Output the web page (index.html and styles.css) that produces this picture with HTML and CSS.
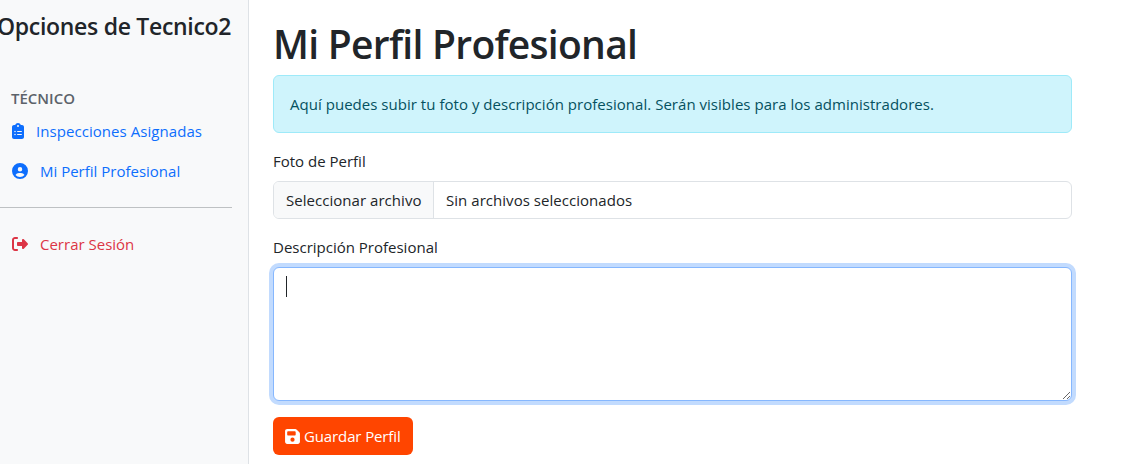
FILE: index.html
```html
<!DOCTYPE html>
<html lang="es">
<head>
<meta charset="utf-8">
<title>Mi Perfil Profesional</title>
<link rel="stylesheet" href="styles.css">
</head>
<body>
<div class="layout">
  <aside class="sidebar">
    <h4 class="sidebar-title">Opciones de Tecnico2</h4>
    <h6 class="sidebar-heading">TÉCNICO</h6>
    <nav class="menu">
      <a class="menu-link inspections"><svg class="icon" width="12" height="16" viewBox="0 0 384 512"><path d="M192 0c-41.800 0-77.400 26.700-90.500 64H64C28.700 64 0 92.700 0 128v320c0 35.300 28.700 64 64 64h256c35.300 0 64-28.700 64-64V128c0-35.300-28.700-64-64-64h-37.500C269.400 26.700 233.800 0 192 0zm0 64a32 32 0 1 1 0 64 32 32 0 1 1 0-64zM72 272a24 24 0 1 1 48 0 24 24 0 1 1-48 0zm104-16h128c8.800 0 16 7.200 16 16s-7.200 16-16 16H176c-8.800 0-16-7.200-16-16s7.200-16 16-16zM72 368a24 24 0 1 1 48 0 24 24 0 1 1-48 0zm88 0c0-8.800 7.200-16 16-16h128c8.800 0 16 7.200 16 16s-7.200 16-16 16H176c-8.800 0-16-7.200-16-16z"/></svg><span>Inspecciones Asignadas</span></a>
      <a class="menu-link profile"><svg class="icon" width="16" height="16" viewBox="0 0 512 512"><path d="M399 384.200C376.900 345.800 335.400 320 288 320h-64c-47.400 0-88.900 25.800-111 64.200 35.200 39.200 86.200 63.800 143 63.800s107.800-24.700 143-63.800zM0 256a256 256 0 1 1 512 0A256 256 0 1 1 0 256zm256 16a72 72 0 1 0 0-144 72 72 0 1 0 0 144z"/></svg><span>Mi Perfil Profesional</span></a>
    </nav>
    <hr class="divider">
    <a class="menu-link logout"><svg class="icon" width="16" height="16" viewBox="0 0 512 512"><path d="M377.900 105.900L500.700 228.700c7.200 7.200 11.300 17.100 11.300 27.300s-4.100 20.100-11.300 27.300L377.900 406.100c-6.400 6.400-15 9.900-24 9.900-18.700 0-33.900-15.200-33.900-33.900V320H192c-17.700 0-32-14.300-32-32v-64c0-17.700 14.300-32 32-32h128v-62.100c0-18.700 15.200-33.900 33.900-33.900 9 0 17.600 3.600 24 9.900zM160 96H96c-17.700 0-32 14.300-32 32v256c0 17.700 14.300 32 32 32h64c17.700 0 32 14.300 32 32s-14.300 32-32 32H96c-53 0-96-43-96-96V128C0 75 43 32 96 32h64c17.700 0 32 14.300 32 32s-14.300 32-32 32z"/></svg><span>Cerrar Sesión</span></a>
  </aside>
  <main class="content">
    <h1 class="page-title">Mi Perfil Profesional</h1>
    <div class="alert"><span>Aquí puedes subir tu foto y descripción profesional. Serán visibles para los administradores.</span></div>
    <div class="form-label photo-label">Foto de Perfil</div>
    <div class="file-input">
      <span class="file-button">Seleccionar archivo</span>
      <span class="file-name">Sin archivos seleccionados</span>
    </div>
    <div class="form-label description-label">Descripción Profesional</div>
    <div class="editor">
      <textarea class="description" aria-label="Descripción Profesional"></textarea>
      <span class="caret"></span>
    </div>
    <button class="save" type="button"><svg class="icon" width="15" height="17" viewBox="0 0 448 512"><path d="M64 32C28.700 32 0 60.700 0 96v320c0 35.300 28.700 64 64 64h320c35.300 0 64-28.700 64-64V173.300c0-17-6.700-33.300-18.700-45.300L352 50.700C340 38.700 323.700 32 306.700 32H64zm0 96c0-17.700 14.300-32 32-32h192c17.700 0 32 14.300 32 32v64c0 17.700-14.300 32-32 32H96c-17.700 0-32-14.300-32-32v-64zm160 160a64 64 0 1 1 0 128 64 64 0 1 1 0-128z"/></svg><span>Guardar Perfil</span></button>
  </main>
</div>
</body>
</html>
```
FILE: styles.css
```css
* { box-sizing: border-box; }
body {
  margin: 0;
  overflow: hidden;
  background: #fff;
  color: #212529;
  font: 400 15px/24px "Open Sans", "Noto Sans", sans-serif;
}
h1, h4, h6 { margin: 0; font-weight: 500; }
.icon { flex: none; fill: currentColor; }
.layout { display: flex; height: 464px; }
.sidebar {
  flex: none;
  width: 249px;
  padding: 12px 16px 0 0;
  background: #f8f9fa;
  border-right: 1px solid #dee2e6;
}
.sidebar-title {
  margin-left: -3px;
  font-size: 23px;
  font-weight: 600;
  line-height: 29px;
  letter-spacing: -0.3px;
  white-space: nowrap;
}
.sidebar-heading {
  margin: 48px 0 0 11px;
  font-size: 15px;
  font-weight: 600;
  line-height: 19px;
  color: #5c636a;
}
.menu { margin-top: 3px; }
.menu-link {
  display: flex;
  align-items: center;
  height: 40px;
  padding-left: 11.5px;
  gap: 12.500px;
  color: #0d6efd;
  white-space: nowrap;
}
.inspections { letter-spacing: 0.06px; }
.divider {
  height: 1px;
  margin: 16px 0;
  border: 0;
  background: #bec1c3;
}
.logout { color: #dc3545; }
.content { flex: none; width: 823px; padding: 20px 0 0 24px; }
.page-title {
  font-size: 39px;
  font-weight: 600;
  line-height: 48px;
  letter-spacing: -0.72px;
  white-space: nowrap;
}
.alert {
  height: 58px;
  margin-top: 7px;
  padding: 16px;
  border: 1px solid #9eeaf9;
  border-radius: 6px;
  background: #cff4fc;
  color: #055160;
  letter-spacing: 0.03px;
  white-space: nowrap;
}
.photo-label { margin-top: 16px; }
.form-label { margin-bottom: 8px; }
.file-input {
  display: flex;
  height: 38px;
  overflow: hidden;
  border: 1px solid #dee2e6;
  border-radius: 6px;
  letter-spacing: 0.04px;
}
.file-button {
  width: 160px;
  padding: 6px 0 6px 12px;
  border-right: 1px solid #dee2e6;
  background: #f8f9fa;
  white-space: nowrap;
}
.file-name { padding: 6px 12px; }
.description-label { margin-top: 16px; }
.editor { position: relative; height: 134px; }
.description {
  display: block;
  width: 100%;
  height: 134px;
  padding: 6px 12px;
  border: 1px solid #86b7fe;
  border-radius: 6px;
  outline: 0;
  box-shadow: 0 0 0 4px #c2dbfe;
  resize: vertical;
}
.caret {
  position: absolute;
  left: 13px;
  top: 9px;
  width: 1px;
  height: 21px;
  background: #212529;
}
.save {
  display: flex;
  align-items: center;
  width: 140px;
  height: 38px;
  margin-top: 16px;
  padding: 0 0 0 12px;
  gap: 4px;
  border: 0;
  border-radius: 6px;
  background: #ff4500;
  color: #fff;
  font: inherit;
  letter-spacing: -0.12px;
  white-space: nowrap;
}
```
